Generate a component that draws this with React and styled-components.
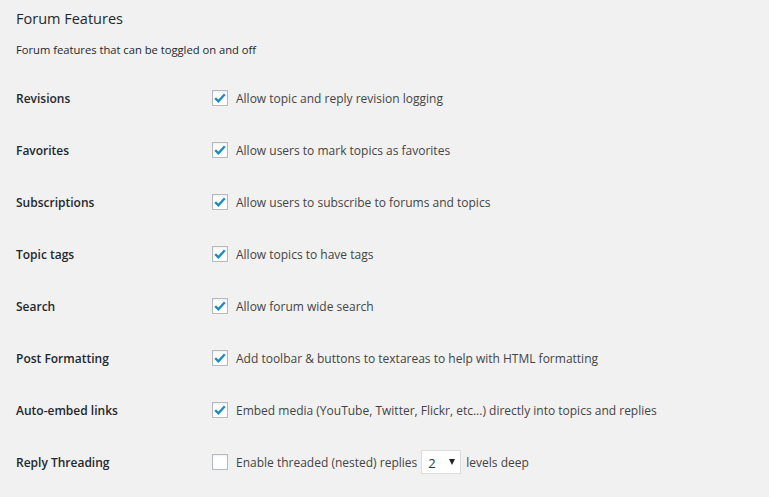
import React from 'react';
import styled, { createGlobalStyle } from 'styled-components';

const Global = createGlobalStyle`
  body {
    margin: 0;
    background: #f1f1f1;
    font-family: "Open Sans", "Noto Sans", sans-serif;
    color: #444;
  }
`;

const Wrap = styled.div`
  padding: 0 16px;
  display: flex;
  flex-direction: column;
`;

const Title = styled.h2`
  margin: 0;
  height: 38px;
  line-height: 38px;
  font-size: 14.5px;
  font-weight: 400;
  color: #23282d;
`;

const Desc = styled.p`
  margin: 0 0 10px;
  height: 24px;
  line-height: 24px;
  font-size: 11.2px;
  color: #23282d;
`;

const Table = styled.div`
  display: flex;
  flex-direction: column;
`;

const Row = styled.div`
  display: grid;
  grid-template-columns: 196px 1fr;
  align-items: center;
  height: 52px;
`;

const Label = styled.div`
  font-size: 12px;
  font-weight: 600;
  color: #23282d;
`;

const Field = styled.label`
  display: flex;
  align-items: center;
  font-size: 12px;
  color: #444;
`;

const Box = styled.span`
  width: 16px;
  height: 16px;
  box-sizing: border-box;
  border: 1px solid #b4b9be;
  background: #fff;
  box-shadow: inset 0 1px 2px rgba(0, 0, 0, 0.07);
  margin-right: 8px;
  display: flex;
  align-items: center;
  justify-content: center;
  flex-shrink: 0;
`;

const Select = styled.span`
  width: 40px;
  height: 24px;
  box-sizing: border-box;
  border: 1px solid #ddd;
  background: #fff;
  margin: 0 5px 0 4px;
  display: flex;
  align-items: center;
  justify-content: space-between;
  padding: 2px 5px 0 6px;
  font-size: 13px;
  color: #32373c;
`;

const Arrow = styled.span`
  width: 0;
  height: 0;
  border-left: 3.5px solid transparent;
  border-right: 3.5px solid transparent;
  border-top: 6px solid #222;
  margin-bottom: 2px;
`;

const Check = () => (
  <svg width="14" height="14" viewBox="0 0 14 14">
    <path d="M2.2 7.2 L5.4 10.3 L11.8 3.2" fill="none" stroke="#1e8cbe" strokeWidth="2.4" />
  </svg>
);

const CheckBox = ({ checked }) => <Box>{checked && <Check />}</Box>;

const rows = [
  ['Revisions', 'Allow topic and reply revision logging'],
  ['Favorites', 'Allow users to mark topics as favorites'],
  ['Subscriptions', 'Allow users to subscribe to forums and topics'],
  ['Topic tags', 'Allow topics to have tags'],
  ['Search', 'Allow forum wide search'],
  ['Post Formatting', 'Add toolbar & buttons to textareas to help with HTML formatting'],
  ['Auto-embed links', 'Embed media (YouTube, Twitter, Flickr, etc...) directly into topics and replies'],
];

export default function App() {
  return (
    <>
      <Global />
      <Wrap>
        <Title>Forum Features</Title>
        <Desc>Forum features that can be toggled on and off</Desc>
        <Table>
          {rows.map(([label, text]) => (
            <Row key={label}>
              <Label>{label}</Label>
              <Field>
                <CheckBox checked />
                {text}
              </Field>
            </Row>
          ))}
          <Row>
            <Label>Reply Threading</Label>
            <Field>
              <CheckBox />
              Enable threaded (nested) replies
              <Select>
                2<Arrow />
              </Select>
              levels deep
            </Field>
          </Row>
        </Table>
      </Wrap>
    </>
  );
}
